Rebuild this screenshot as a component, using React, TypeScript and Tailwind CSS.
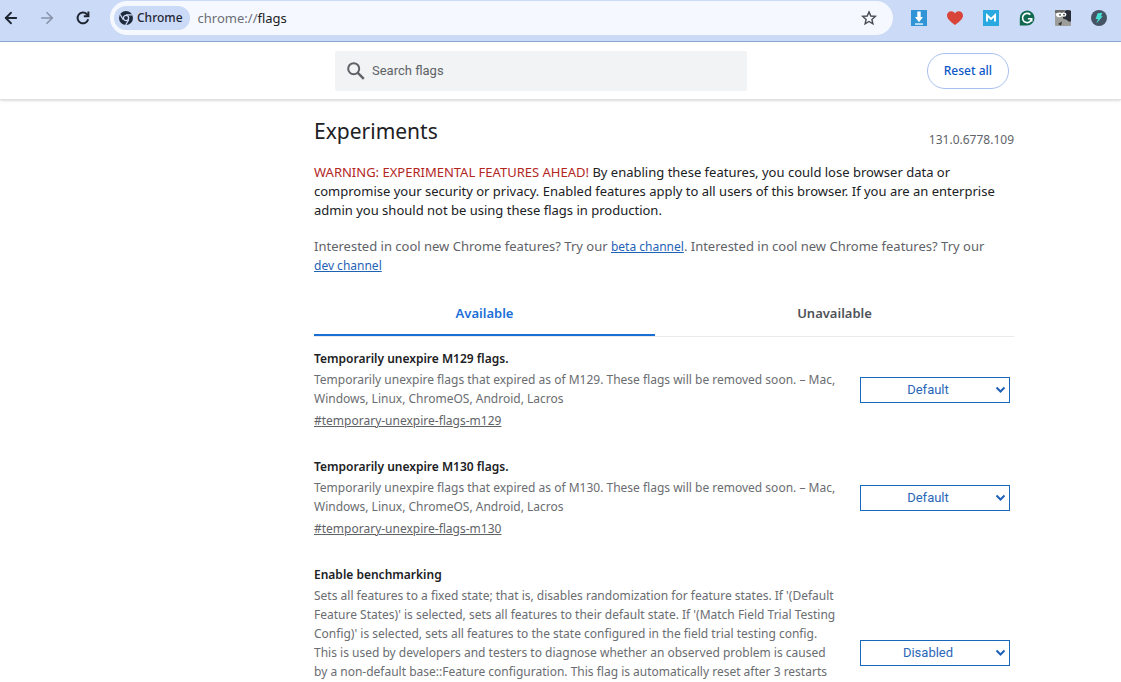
import { useState } from 'react';
import { ArrowLeft, ArrowRight } from 'lucide-react';

interface Flag {
  id: string;
  title: string;
  description: string;
  options: string[];
  value: string;
}

const FLAGS: Flag[] = [
  {
    id: 'temporary-unexpire-flags-m129',
    title: 'Temporarily unexpire M129 flags.',
    description:
      'Temporarily unexpire flags that expired as of M129. These flags will be removed soon. – Mac, Windows, Linux, ChromeOS, Android, Lacros',
    options: ['Default', 'Enabled', 'Disabled'],
    value: 'Default',
  },
  {
    id: 'temporary-unexpire-flags-m130',
    title: 'Temporarily unexpire M130 flags.',
    description:
      'Temporarily unexpire flags that expired as of M130. These flags will be removed soon. – Mac, Windows, Linux, ChromeOS, Android, Lacros',
    options: ['Default', 'Enabled', 'Disabled'],
    value: 'Default',
  },
  {
    id: 'enable-benchmarking',
    title: 'Enable benchmarking',
    description:
      "Sets all features to a fixed state; that is, disables randomization for feature states. If '(Default Feature States)' is selected, sets all features to their default state. If '(Match Field Trial Testing Config)' is selected, sets all features to the state configured in the field trial testing config. This is used by developers and testers to diagnose whether an observed problem is caused by a non-default base::Feature configuration. This flag is automatically reset after 3 restarts and will be off from the 4th restart. On the 4th restart, the flag will appear to be off but the effect is still active. – Mac, Windows, Linux, ChromeOS, Android",
    options: ['Disabled', 'Default Feature States', 'Match Field Trial Testing Config'],
    value: 'Disabled',
  },
];

function ReloadIcon() {
  return (
    <svg width="18" height="18" viewBox="0 0 18 18" fill="none" stroke="#1f2633" strokeWidth="2">
      <path d="M14.2 10.3A5.4 5.4 0 1 1 12.9 5.2L14.4 6.7" />
      <path d="M14.4 2.6V7.2H9.8" />
    </svg>
  );
}

function ChromeIcon() {
  return (
    <svg width="14" height="14" viewBox="0 0 14 14">
      <circle cx="7" cy="7" r="7" fill="#1f2a3d" />
      <circle cx="7" cy="7" r="2.6" fill="#1f2a3d" stroke="#cbdaf6" strokeWidth="1.3" />
      <path d="M7 3.8H13.4M9.8 8.6L6.6 14M4.2 8.6L1 3.2" stroke="#cbdaf6" strokeWidth="1.2" fill="none" />
    </svg>
  );
}

function StarIcon() {
  return (
    <svg width="16" height="16" viewBox="0 0 16 16" fill="none" stroke="#474b52" strokeWidth="1.4">
      <path d="M8 1.9L9.8 6L14.3 6.4L10.9 9.4L11.9 13.8L8 11.5L4.1 13.8L5.1 9.4L1.7 6.4L6.2 6Z" />
    </svg>
  );
}

function SearchIcon() {
  return (
    <svg width="18" height="18" viewBox="0 0 18 18" fill="none" stroke="#5f6368" strokeWidth="2">
      <circle cx="6.7" cy="6.7" r="5.5" />
      <path d="M10.6 10.6L16.8 16.8" strokeWidth="2.4" />
    </svg>
  );
}

function DownloadExtension() {
  return (
    <svg width="16" height="16" viewBox="0 0 16 16">
      <rect width="16" height="16" fill="#2f95d6" />
      <path d="M6.3 1.5H9.7V7H12L8 12.2L4 7H6.3Z" fill="#fff" />
      <rect x="4" y="13.4" width="8" height="1.3" fill="#fff" />
    </svg>
  );
}

function HeartExtension() {
  return (
    <svg width="16" height="16" viewBox="0 0 16 16">
      <path
        d="M8 15C5.5 12.8 0 9.7 0 5.4C0 2.9 1.9 1.2 4.1 1.2C5.8 1.2 7.2 2 8 3.5C8.8 2 10.2 1.2 11.9 1.2C14.1 1.2 16 2.9 16 5.4C16 9.7 10.5 12.8 8 15Z"
        fill="#d9443a"
      />
    </svg>
  );
}

function MailExtension() {
  return (
    <svg width="16" height="16" viewBox="0 0 16 16">
      <rect width="16" height="16" fill="#29a9e0" />
      <path d="M4 11.6V5.3L8 9L12 5.3V11.6" fill="none" stroke="#fff" strokeWidth="2" />
    </svg>
  );
}

function GrammarExtension() {
  return (
    <svg width="16" height="16" viewBox="0 0 16 16">
      <path d="M8 0.5A7.5 7.5 0 1 1 8 15.5H0.8V8A7.5 7.5 0 0 1 8 0.5Z" fill="#11694f" />
      <path d="M11.3 4.6A4.6 4.6 0 1 0 12.7 8.7H8.9M12.7 8.7V11.6" fill="none" stroke="#fff" strokeWidth="1.6" />
    </svg>
  );
}

function FaceExtension() {
  return (
    <svg width="16" height="16" viewBox="0 0 16 16">
      <rect width="16" height="16" rx="1" fill="#9d9d9b" />
      <path d="M0 1Q0 0 1 0H10L8 3H0Z" fill="#6b6a68" />
      <path d="M10 1Q12 -1 16 1V11Q14 13 12 10L8 8.5L8 6Z" fill="#2a2d38" />
      <ellipse cx="4.2" cy="4.8" rx="3.2" ry="2.4" fill="#fff" />
      <ellipse cx="8.8" cy="4.6" rx="2.6" ry="2.2" fill="#fff" />
      <circle cx="5" cy="4.8" r="0.9" fill="#333" />
      <circle cx="9" cy="4.6" r="0.9" fill="#333" />
      <path d="M3 14L7 11.5L6 15.5Z" fill="#2d2d2d" />
    </svg>
  );
}

function BoltExtension() {
  return (
    <svg width="16" height="16" viewBox="0 0 16 16">
      <circle cx="8" cy="8" r="8" fill="#465365" />
      <path d="M6.6 3.2L11.4 2.8L10 6.2H11.8L5.4 13.4L7 9H4.6Z" fill="#43dfd2" />
    </svg>
  );
}

const EXTENSIONS = [
  { name: 'Downloader', Icon: DownloadExtension },
  { name: 'Favorites', Icon: HeartExtension },
  { name: 'Mail', Icon: MailExtension },
  { name: 'Grammar', Icon: GrammarExtension },
  { name: 'Faces', Icon: FaceExtension },
  { name: 'Bolt', Icon: BoltExtension },
];

function Toolbar() {
  const [url, setUrl] = useState('flags');

  return (
    <div className="flex h-[42px] shrink-0 items-start border-b border-[#8fabd6] bg-[#cbdaf6] pr-3.5 pt-px">
      <div className="flex h-[34px] w-[110px] shrink-0 items-center gap-[18px] pl-[2px]">
        <button type="button" aria-label="Back">
          <ArrowLeft size={18} color="#1f2633" strokeWidth={2.4} />
        </button>
        <button type="button" aria-label="Forward">
          <ArrowRight size={18} color="#8792a8" strokeWidth={2.2} />
        </button>
        <button type="button" aria-label="Reload">
          <ReloadIcon />
        </button>
      </div>

      <div className="flex h-[34px] flex-1 items-center rounded-full bg-[#f5f8fe] pl-1 pr-4">
        <div className="flex h-6 items-center gap-1 rounded-full bg-[#cbdaf6] pl-[5px] pr-[7px] text-[12px] font-medium text-[#1f2633]">
          <ChromeIcon />
          <span>Chrome</span>
        </div>
        <label className="ml-2 flex flex-1 items-center pt-px text-[13px] text-[#6b6f76]">
          <span>chrome://</span>
          <input
            aria-label="Address"
            value={url}
            onChange={(e) => setUrl(e.target.value)}
            className="min-w-0 flex-1 bg-transparent text-[#202124] outline-none"
          />
        </label>
        <button type="button" aria-label="Bookmark this tab">
          <StarIcon />
        </button>
      </div>

      <div className="ml-[18px] flex h-[34px] items-center gap-5">
        {EXTENSIONS.map(({ name, Icon }) => (
          <button key={name} type="button" aria-label={name}>
            <Icon />
          </button>
        ))}
      </div>
    </div>
  );
}

function FlagRow({ flag }: { flag: Flag }) {
  const [value, setValue] = useState(flag.value);

  return (
    <div className="flex items-center">
      <div className="min-w-0 flex-1 pr-5">
        <h3 className="text-[12px] font-semibold leading-[22px] text-[#202124]">{flag.title}</h3>
        <p className="text-[12px] leading-[19px] text-[#6a6d71]">{flag.description}</p>
        <a
          href={`#${flag.id}`}
          className="mt-[3px] block w-fit text-[12px] leading-5 text-[#5f6368] underline"
        >
          #{flag.id}
        </a>
      </div>
      <div className="relative mr-1 w-[150px] shrink-0">
        <select
          aria-label={flag.title}
          value={value}
          onChange={(e) => setValue(e.target.value)}
          className="block h-[26px] w-full appearance-none border border-[#1967b8] bg-white pl-1 pr-[18px] font-['Roboto',sans-serif] text-[13px] text-[#2a67b8] [text-align-last:center]"
        >
          {flag.options.map((option) => (
            <option key={option}>{option}</option>
          ))}
        </select>
        <svg
          className="pointer-events-none absolute right-1 top-[9px]"
          width="11"
          height="8"
          viewBox="0 0 11 8"
          fill="none"
          stroke="#1f60b8"
          strokeWidth="2"
        >
          <path d="M1.5 1.5L5.5 5.5L9.5 1.5" />
        </svg>
      </div>
    </div>
  );
}

export default function App() {
  const [tab, setTab] = useState('Available');
  const [search, setSearch] = useState('');

  return (
    <div className="flex h-screen flex-col overflow-hidden bg-white font-['Noto_Sans',sans-serif] text-[#202124]">
      <Toolbar />

      <header className="flex h-[58px] shrink-0 items-center justify-between border-b border-[#e0e1e2] pl-[335px] pr-28 shadow-sm">
        <label className="flex h-10 max-w-[412px] flex-1 items-center gap-[7px] rounded-xs bg-[#f1f3f4] pl-3">
          <SearchIcon />
          <input
            type="text"
            aria-label="Search flags"
            placeholder="Search flags"
            value={search}
            onChange={(e) => setSearch(e.target.value)}
            className="min-w-0 flex-1 bg-transparent font-['Roboto',sans-serif] text-[13px] outline-none placeholder:text-[#5f6368]"
          />
        </label>
        <button
          type="button"
          className="h-9 shrink-0 rounded-full border border-[#a8c0f0] px-4 text-[12px] font-medium text-[#0b57c8]"
        >
          Reset all
        </button>
      </header>

      <main className="ml-[314px] max-w-[700px]">
        <div className="flex items-end justify-between pt-4">
          <h1 className="pb-0.5 text-[21px] leading-[30px]">Experiments</h1>
          <span className="text-[12px] leading-4 text-[#5f6368]">131.0.6778.109</span>
        </div>

        <p className="mt-[15px] text-[13px] leading-[19px]">
          <span className="text-[#b3261e]">WARNING: EXPERIMENTAL FEATURES AHEAD!</span> By enabling these
          features, you could lose browser data or compromise your security or privacy. Enabled features
          apply to all users of this browser. If you are an enterprise admin you should not be using these
          flags in production.
        </p>

        <p className="mt-[17px] text-[13px] leading-[19px] text-[#5f6368]">
          Interested in cool new Chrome features? Try our{' '}
          <a href="#beta" className="whitespace-nowrap text-[12px] text-[#1f63b5] underline">
            beta channel
          </a>
          . Interested in cool new Chrome features? Try our{' '}
          <a href="#dev" className="whitespace-nowrap text-[12px] text-[#1f63b5] underline">
            dev channel
          </a>
        </p>

        <div role="tablist" className="mt-4 flex border-b border-[#e8eaed]">
          {['Available', 'Unavailable'].map((name) => (
            <button
              key={name}
              type="button"
              role="tab"
              aria-selected={tab === name}
              onClick={() => setTab(name)}
              className={
                tab === name
                  ? 'h-[45px] w-[341px] border-b-2 border-[#1a6fd6] pt-0.5 text-[13px] font-semibold text-[#1a6fd6]'
                  : 'h-[45px] flex-1 border-b-2 border-transparent pt-0.5 text-[13px] font-semibold text-[#4f5358]'
              }
            >
              {name}
            </button>
          ))}
        </div>

        <div className="mt-[11px] flex flex-col gap-[25px]">
          {FLAGS.map((flag) => (
            <FlagRow key={flag.id} flag={flag} />
          ))}
        </div>
      </main>
    </div>
  );
}
